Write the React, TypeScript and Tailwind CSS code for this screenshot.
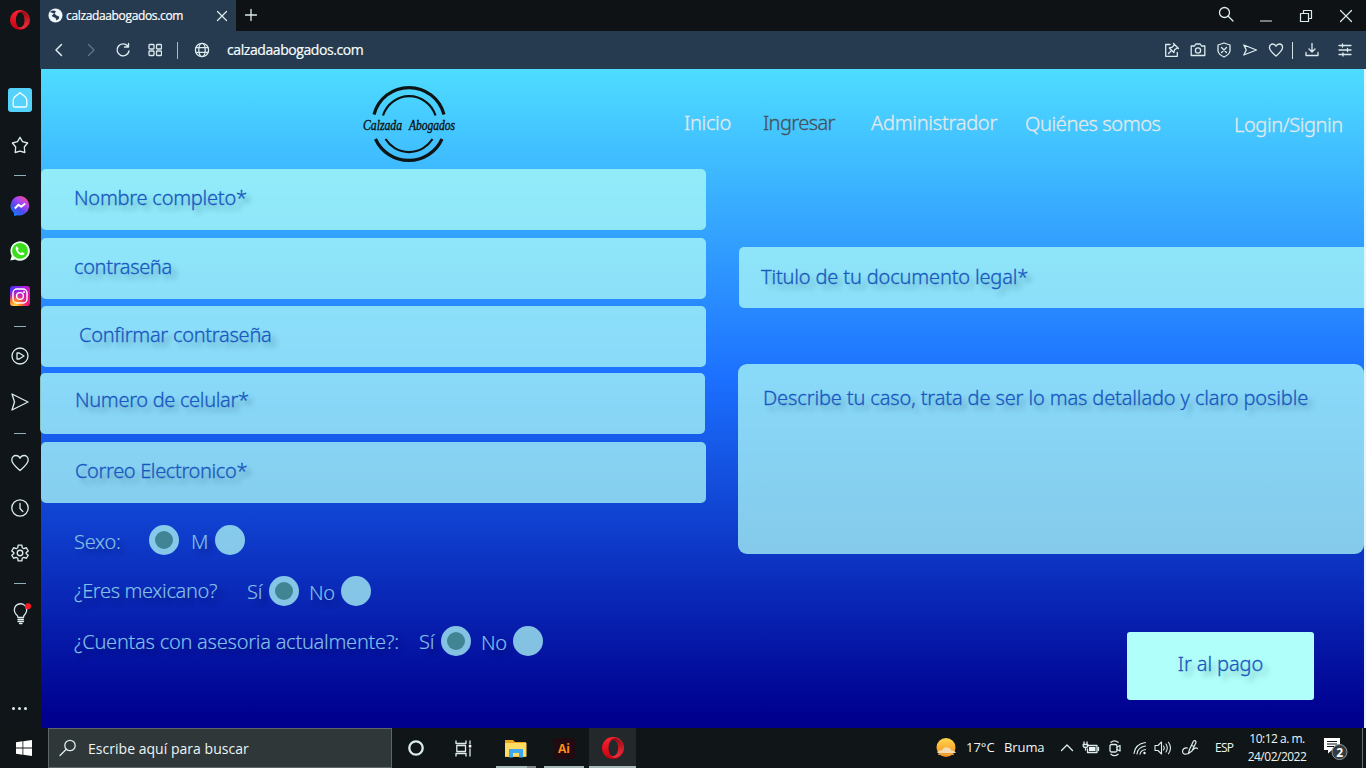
import type { ReactNode } from "react";

type IconProps = { w?: number; h?: number; box?: string; sw?: number; color?: string; children: ReactNode };

function Icon({ w = 20, h = 20, box, sw = 1.3, color = "#dcecee", children }: IconProps) {
  return (
    <svg
      width={w}
      height={h}
      viewBox={box ?? `0 0 ${w} ${h}`}
      fill="none"
      stroke={color}
      strokeWidth={sw}
      strokeLinecap="round"
      strokeLinejoin="round"
      className="shrink-0"
    >
      {children}
    </svg>
  );
}

function OperaLogo({ size }: { size: number }) {
  return (
    <svg width={size} height={size} viewBox="0 0 24 24" className="shrink-0">
      <defs>
        <linearGradient id="operaRed" x1="0" y1="0" x2="0" y2="1">
          <stop offset="0" stopColor="#ff2433" />
          <stop offset="1" stopColor="#c4000f" />
        </linearGradient>
        <linearGradient id="operaDark" x1="0" y1="0" x2="0" y2="1">
          <stop offset="0" stopColor="#8c0a12" />
          <stop offset="0.6" stopColor="#d6202c" />
          <stop offset="1" stopColor="#e83440" />
        </linearGradient>
      </defs>
      <path fillRule="evenodd" fill="url(#operaRed)" d="M12 0a12 12 0 1 0 0 24a12 12 0 0 0 0-24zM12.5 2.6c3 0 5.2 4.2 5.2 9.4s-2.200 9.400-5.200 9.400s-5.400-4.200-5.400-9.400s2.400-9.400 5.400-9.400z" />
      <path fill="url(#operaDark)" d="M9 3.800C10.500 1.800 14 .9 16.500 1.900c9.500 4.500 9.500 15.700 0 20.200c-2.500 1-6 .1-7.500-1.900c5 2.500 8.700-2 8.700-8.200S14 1.300 9 3.800z" />
    </svg>
  );
}

function Cell({ className, children }: { className: string; children?: ReactNode }) {
  return <div className={`flex shrink-0 items-center justify-center ${className}`}>{children}</div>;
}

const Dash = () => <div className="h-px w-3 bg-[#8fb0b8]" />;
const heart = "M10 17.500C6 14 1.800 10.800 1.800 7C1.800 4.300 3.700 2.500 5.900 2.500C7.700 2.500 9.200 3.500 10 5.200C10.800 3.500 12.300 2.500 14.100 2.500C16.300 2.500 18.200 4.300 18.200 7C18.200 10.800 14 14 10 17.500Z";

function Sidebar() {
  return (
    <aside className="flex w-[41px] shrink-0 flex-col items-center bg-[#0f1518] pr-[2px]">
      <Cell className="h-10 w-10"><OperaLogo size={20} /></Cell>
      <div className="h-[37px] shrink-0" />
      <Cell className="h-[46px]">
        <div className="flex h-6 w-6 items-center justify-center rounded-[3px] bg-[#55d2fb]">
          <Icon w={18} h={18} color="#f2ffff">
            <path d="M9 1.700L14.500 6L15.800 9V14.500Q15.800 16 14.300 16H3.700Q2.200 16 2.200 14.500V9L3.500 6Z" />
          </Icon>
        </div>
      </Cell>
      <Cell className="h-11">
        <Icon w={18} h={18}>
          <path d="M9 1.300L11.500 5.600L16.600 7L13.300 11L13.800 16.500L9 15.200L4.200 16.500L4.700 11L1.400 7L6.500 5.600Z" />
        </Icon>
      </Cell>
      <Cell className="h-4"><Dash /></Cell>
      <Cell className="h-[46px]">
        <svg width="20" height="20" viewBox="0 0 20 20">
          <defs>
            <linearGradient id="msgr" x1="0.9" y1="0" x2="0.2" y2="1">
              <stop offset="0" stopColor="#ff5070" />
              <stop offset="0.35" stopColor="#b044f4" />
              <stop offset="0.65" stopColor="#5048f0" />
              <stop offset="1" stopColor="#1080ff" />
            </linearGradient>
          </defs>
          <path fill="url(#msgr)" d="M10 0a9.800 9.700 0 1 1-2.500 19.200L4 20V17A9.800 9.700 0 0 1 10 0z" />
          <path d="M4.800 12.500L8.500 8.700L11.200 10.800L15.200 7.500" fill="none" stroke="#fff" strokeWidth="2" strokeLinejoin="round" />
        </svg>
      </Cell>
      <Cell className="h-11">
        <svg width="20" height="20" viewBox="0 0 20 20">
          <path fill="#edfff0" d="M.3 19.600L1.700 14.800A9.700 9.700 0 1 1 5.300 18.400z" />
          <circle cx="10" cy="9.900" r="7.900" fill="#3ade1c" />
          <path fill="#fff" d="M6.900 5.200Q5.100 6.300 5.700 8.400Q7.400 13.400 12.200 14.300Q14.400 14 14.500 12.200L11.900 10.900L10.900 12.200Q8.800 11.400 7.700 9.100L8.700 8Z" />
        </svg>
      </Cell>
      <Cell className="h-[46px]">
        <svg width="20" height="20" viewBox="0 0 20 20">
          <defs>
            <linearGradient id="igBase" x1="0" y1="0" x2="1" y2="0.7">
              <stop offset="0" stopColor="#3b34ff" />
              <stop offset="0.5" stopColor="#b01de0" />
              <stop offset="1" stopColor="#f01682" />
            </linearGradient>
            <radialGradient id="igWarm" cx="0.25" cy="1" r="0.75">
              <stop offset="0" stopColor="#ffe040" />
              <stop offset="0.4" stopColor="#ff7a20" />
              <stop offset="1" stopColor="#f01682" stopOpacity="0" />
            </radialGradient>
          </defs>
          <rect width="20" height="20" rx="3" fill="url(#igBase)" />
          <rect width="20" height="20" rx="3" fill="url(#igWarm)" />
          <rect x="3" y="3" width="14" height="14" rx="4" fill="none" stroke="#fff" strokeWidth="1.400" />
          <circle cx="10" cy="10" r="3.400" fill="none" stroke="#fff" strokeWidth="1.400" />
          <circle cx="14" cy="6" r="1" fill="#fff" />
        </svg>
      </Cell>
      <Cell className="h-[14px]"><Dash /></Cell>
      <Cell className="h-[46px]">
        <Icon w={18} h={18}><circle cx="9" cy="9" r="8" /><path d="M6 6V12H8.200L13 9L8.200 6Z" /></Icon>
      </Cell>
      <Cell className="h-[46px]">
        <Icon w={18} h={18}><path d="M1 1L17 9L1 17L3.500 9Z" /></Icon>
      </Cell>
      <Cell className="h-4"><Dash /></Cell>
      <Cell className="h-11"><Icon><path d={heart} /></Icon></Cell>
      <Cell className="h-[46px]">
        <Icon w={18} h={18}><circle cx="9" cy="9" r="8.200" /><path d="M9 4.500V9.500L11.800 12.500" /></Icon>
      </Cell>
      <Cell className="h-[43px]">
        <Icon w={18} h={18} box="0 0 24 24" sw={1.8}>
          <path d="M9.500 1.500H14.500L15 5L17.200 6.300L20.500 5L23 9.300L20.200 11.500V13L23 15L20.500 19L17.200 17.800L15 19L14.500 22.500H9.500L9 19L6.800 17.800L3.500 19L1 15L3.800 13V11.500L1 9.300L3.500 5L6.800 6.300L9 5Z" />
          <circle cx="12" cy="12" r="3.700" />
        </Icon>
      </Cell>
      <Cell className="h-[18px]"><Dash /></Cell>
      <Cell className="h-[42px] pt-[2px]">
        <Icon w={22} h={22}>
          <path d="M9 14.500Q9 12.500 7 11.200A6.200 6.200 0 1 1 16.200 11Q14.500 12.500 14.500 14.500Z" />
          <path d="M9 16.500H14.500M9 18.500H14.500M10.500 20.500H13" />
          <circle cx="19" cy="3.200" r="3" fill="#ff1a24" stroke="none" />
        </Icon>
      </Cell>
      <div className="h-[62px] shrink-0" />
      <Cell className="h-6 gap-[3px]">
        <i className="h-[3px] w-[3px] rounded-full bg-[#dcecee]" />
        <i className="h-[3px] w-[3px] rounded-full bg-[#dcecee]" />
        <i className="h-[3px] w-[3px] rounded-full bg-[#dcecee]" />
      </Cell>
    </aside>
  );
}

function TabBar() {
  return (
    <div className="flex h-[31px] shrink-0 bg-[#0e1214] text-white">
      <div className="flex w-[196px] items-center bg-[#263a50] pl-[8px]">
        <svg width="15" height="15" viewBox="0 0 15 15">
          <circle cx="7.500" cy="7.500" r="7" fill="#eef6fa" />
          <path d="M2 4Q5 1.500 8 3.500L6.500 5.500L8.500 7.500Q12 8 11 10.500L8.500 12.500L7.500 10L3.500 8L6 5.500Z" fill="#263a50" />
        </svg>
        <span className="ml-[3px] w-[149px] font-['Open_Sans','Noto_Sans',sans-serif] text-[12px] tracking-[-0.35px] text-white [-webkit-text-stroke:0.2px]">calzadaabogados.com</span>
        <Icon w={14} h={14}><path d="M2.500 2.500L11.500 11.500M11.500 2.500L2.500 11.500" /></Icon>
      </div>
      <Cell className="w-[30px] pb-px"><Icon w={14} h={14} sw={1.3}><path d="M7 1.500V12.500M1.500 7H12.500" /></Icon></Cell>
      <div className="flex-1" />
      <Cell className="w-10 pb-[3px]"><Icon w={16} h={16} sw={1.3}><circle cx="6.500" cy="6.500" r="5" /><path d="M10.200 10.200L15 15" /></Icon></Cell>
      <Cell className="w-10"><Icon w={14} h={14} sw={1.2}><path d="M1.500 12H12.500" /></Icon></Cell>
      <Cell className="w-10"><Icon w={14} h={14} sw={1.2}><path d="M1.500 4.500H9.500V12.500H1.500ZM4.500 4.500V1.500H12.500V9.500H9.500" /></Icon></Cell>
      <Cell className="w-10"><Icon w={14} h={14} sw={1.2}><path d="M1.500 1.500L12.500 12.500M12.500 1.500L1.500 12.500" /></Icon></Cell>
    </div>
  );
}

function AddressBar() {
  return (
    <div className="flex h-[38px] shrink-0 items-center bg-[#263a50]">
      <Cell className="w-[38px]"><Icon w={12} h={14} sw={1.5}><path d="M8.500 1.500L3 7L8.500 12.500" /></Icon></Cell>
      <Cell className="w-[26px]"><Icon w={12} h={14} sw={1.4} color="#5d7488"><path d="M3.500 1.500L9 7L3.500 12.500" /></Icon></Cell>
      <Cell className="w-[38px]"><Icon w={16} h={16} sw={1.4}><path d="M12.700 4A6 6 0 1 0 14 9M13.500 1.500V5H9.500" /></Icon></Cell>
      <Cell className="w-[26px]">
        <Icon w={14} h={14}><rect x="1" y="1.500" width="5" height="4.500" rx=".8" /><rect x="8.500" y="1.500" width="5" height="4.500" rx=".8" /><rect x="1" y="8" width="5" height="4.500" rx=".8" /><rect x="8.500" y="8" width="5" height="4.500" rx=".8" /></Icon>
      </Cell>
      <Cell className="w-[18px]"><i className="h-[17px] w-px bg-[#a9bcc6]" /></Cell>
      <Cell className="w-[32px]">
        <Icon w={16} h={16}><circle cx="8" cy="8" r="6.600" /><ellipse cx="8" cy="8" rx="3.200" ry="6.600" /><path d="M2 5.700H14M2 10.300H14" /></Icon>
      </Cell>
      <span className="ml-[9px] flex-1 font-['Open_Sans','Noto_Sans',sans-serif] text-[14px] leading-none tracking-[-0.42px] text-[#f6feff] [-webkit-text-stroke:0.2px]">calzadaabogados.com</span>
      <Cell className="w-[26px]">
        <Icon w={16} h={16}><path d="M6 2.500H1.700V14.300H13.300V10.500M4.500 11.500L7.300 8.700M9.500 1.500L14.500 6.500M10.300 2.800L8.300 5.200L5.300 6L9.800 10.500L10.600 7.800L13.200 6" /></Icon>
      </Cell>
      <Cell className="w-[26px]">
        <Icon w={16} h={16}><path d="M1.200 4H4.500L5.800 2H10.200L11.500 4H14.800V13.500H1.200Z" /><circle cx="8" cy="8.500" r="2.600" /></Icon>
      </Cell>
      <Cell className="w-[26px]">
        <Icon w={16} h={16}><path d="M8 1L14 3V9Q13.500 12.500 8 15Q2.500 12.500 2 9V3ZM5.500 5.500L10.500 10.500M10.500 5.500L5.500 10.500" /></Icon>
      </Cell>
      <Cell className="w-[26px]"><Icon w={16} h={16}><path d="M1.800 3L14.500 8L1.800 13L4.300 8Z" /></Icon></Cell>
      <Cell className="w-[26px]"><Icon w={16} h={16} box="0 0 20 20" sw={1.6}><path d={heart} /></Icon></Cell>
      <Cell className="w-[6px]"><i className="h-[17px] w-px bg-[#d0e0e4]" /></Cell>
      <Cell className="w-[33px]">
        <Icon w={16} h={16} sw={1.3}><path d="M8 1.500V10M5 7L8 10L11 7M2 10.500V13.500H14V10.500" /></Icon>
      </Cell>
      <Cell className="mr-[5px] w-[33px]">
        <Icon w={14} h={14}><path d="M1 2.500H13M1 7H13M1 11.500H13M4.500 1V4M9.500 5.500V8.500M5 10V13" /></Icon>
      </Cell>
    </div>
  );
}

function Logo() {
  return (
    <svg width="100" height="82" viewBox="0 0 100 82" fill="none" stroke="#0d1413" className="overflow-visible">
      <path d="M15 31.500A36.200 36.200 0 0 1 85 31.500" strokeWidth="3.200" />
      <path d="M24 32.500A27.500 27.500 0 0 1 76.500 32.500" strokeWidth="2.200" />
      <path d="M16.500 56A36.500 36.500 0 0 0 83 56" strokeWidth="3.200" />
      <path d="M26.500 56A27.700 27.700 0 0 0 73.500 56" strokeWidth="2.200" />
      <text x="4" y="47" textLength="39" lengthAdjust="spacingAndGlyphs" fill="#0d1413" strokeWidth=".4" className="font-['Liberation_Serif',serif] text-[14px] italic">Calzada</text>
      <text x="50" y="47" textLength="46" lengthAdjust="spacingAndGlyphs" fill="#0d1413" strokeWidth=".4" className="font-['Liberation_Serif',serif] text-[14px] italic">Abogados</text>
    </svg>
  );
}

const fieldBase =
  "shrink-0 bg-[rgba(176,253,247,0.74)] text-[#1858c0] [-webkit-text-stroke:0.3px] [text-shadow:5px_5px_5px_rgba(20,60,80,0.35)]";

function Field({ className, children }: { className: string; children: ReactNode }) {
  return <div className={`${fieldBase} h-[61px] whitespace-nowrap rounded-[5px] leading-[28px] ${className}`}>{children}</div>;
}

function Radio({ checked }: { checked?: boolean }) {
  return (
    <span className="flex h-[30px] w-[30px] shrink-0 items-center justify-center rounded-full bg-[rgba(166,240,244,0.79)]">
      {checked && <span className="h-[18px] w-[18px] rounded-full bg-[#418493]" />}
    </span>
  );
}

function Page() {
  return (
    <main className="flex flex-1 flex-col border-r-2 border-[#e8f4f8] bg-[linear-gradient(180deg,#4edcff_0%,#1c70ff_47%,#00008f_98%)] font-['Noto_Sans',sans-serif] text-[20px] font-light">
      <nav className="flex h-[100px] shrink-0 whitespace-nowrap leading-[28px] text-[#e3e9ea] [-webkit-text-stroke:0.3px]">
        <div className="w-[643px] shrink-0 pl-[318px] pt-[14px]"><Logo /></div>
        <span className="w-[79px] shrink-0 pt-10 tracking-[-0.3px]">Inicio</span>
        <span className="w-[108px] shrink-0 pt-10 tracking-[-0.6px] text-[#46525a]">Ingresar</span>
        <span className="w-[154px] shrink-0 pt-10 tracking-[-0.25px]">Administrador</span>
        <span className="w-[209px] shrink-0 pt-[41px] tracking-[-0.4px]">Quiénes somos</span>
        <span className="pt-[42px] tracking-[-0.4px]">Login/Signin</span>
      </nav>
      <div className="flex flex-1">
        <form className="flex w-[697px] shrink-0 flex-col">
          <Field className="w-[665px] pl-[33px] pt-[15px] tracking-[-0.23px]">Nombre completo*</Field>
          <Field className="mt-2 w-[665px] pl-[33px] pt-[15px] tracking-[-0.35px]">contraseña</Field>
          <Field className="mt-[7px] w-[665px] pl-[38px] pt-[15px] tracking-[-0.27px]">Confirmar contraseña</Field>
          <Field className="-ml-px mt-[6px] w-[665px] pl-[35px] pt-[13px] tracking-[-0.32px]">Numero de celular*</Field>
          <Field className="mt-2 w-[665px] pl-[34px] pt-[15px] tracking-[-0.36px]">Correo Electronico*</Field>
          <div className="flex flex-col whitespace-nowrap pl-[33px] pt-[22px] leading-[30px] tracking-[-0.25px] text-[#83c0e8] [-webkit-text-stroke:0.15px] [text-shadow:5px_5px_5px_rgba(0,0,60,0.4)]">
            <div className="flex h-[51px] items-start">
              <span className="w-[75px] pt-[2px]">Sexo:</span>
              <Radio checked />
              <span className="ml-3 w-[24px] pt-[2px]">M</span>
              <Radio />
            </div>
            <div className="flex h-[50px] items-start">
              <span className="w-[173px] tracking-[-0.35px]">¿Eres mexicano?</span>
              <span className="w-[22px] pt-px">Sí</span>
              <Radio checked />
              <span className="ml-[10px] w-[32px] pt-[2px]">No</span>
              <Radio />
            </div>
            <div className="flex items-start">
              <span className="w-[345px] pt-px">¿Cuentas con asesoria actualmente?:</span>
              <span className="w-[22px] pt-px">Sí</span>
              <Radio checked />
              <span className="ml-[10px] w-[32px] pt-[2px]">No</span>
              <Radio />
            </div>
          </div>
        </form>
        <section className="flex flex-1 flex-col pt-[78px]">
          <Field className="ml-px rounded-r-none pl-[22px] pt-[16px] tracking-[-0.16px]">Titulo de tu documento legal*</Field>
          <div className={`${fieldBase} mt-14 h-[190px] whitespace-nowrap rounded-[9px] pl-[25px] pt-5 leading-[28px] tracking-[-0.13px]`}>
            Describe tu caso, trata de ser lo mas detallado y claro posible
          </div>
          <button className="ml-[389px] mt-[78px] h-[68px] w-[187px] shrink-0 rounded-[3px] bg-[#b1fffa] pb-1 font-light tracking-[-0.1px] text-[#1858c0] [-webkit-text-stroke:0.3px] [text-shadow:5px_5px_5px_rgba(20,60,80,0.35)]">
            Ir al pago
          </button>
        </section>
      </div>
    </main>
  );
}

function Taskbar() {
  return (
    <footer className="flex h-10 shrink-0 items-stretch bg-[#101517] font-['Open_Sans','Noto_Sans',sans-serif] text-[#edf5f5]">
      <Cell className="w-12">
        <svg width="16" height="16" viewBox="0 0 16 16" fill="#fff"><path d="M0 2.300L6.500 1.300V7.500H0zM7.300 1.200L16 0V7.500H7.300zM0 8.400H6.500V14.700L0 13.700zM7.300 8.400H16V16L7.300 14.800z" /></svg>
      </Cell>
      <div className="flex w-[344px] shrink-0 items-center border border-[#5c6868] bg-[#2f3739] pl-[10px]">
        <Icon w={18} h={18} sw={1.3}><circle cx="11" cy="6.500" r="5.200" /><path d="M7.300 10.300L1 16.500" /></Icon>
        <span className="ml-[11px] text-[14px] tracking-[0.03px]">Escribe aquí para buscar</span>
      </div>
      <Cell className="w-12"><Icon w={18} h={18} sw={2.3}><circle cx="9" cy="9" r="6.700" /></Icon></Cell>
      <Cell className="w-[47px]">
        <Icon w={17} h={17}><path d="M1 1V3.500H11V1M1 16V13.500H11V16M1.800 5.500H10.500V11.500H1.800ZM15 1V4M15 9V16" /><rect x="13.800" y="5" width="2.500" height="2.500" fill="#fff" stroke="none" /></Icon>
      </Cell>
      <div className="flex w-[57px] shrink-0 flex-col items-center justify-end">
        <svg width="22" height="20" viewBox="0 0 22 20" className="mb-[7px]">
          <path d="M0 1H8L10 3H21V18H0z" fill="#eda522" />
          <path d="M0 4H21.500V17.500H0z" fill="#ffdb63" />
          <path d="M4 10H18V18.500H14V14H8V18.500H4z" fill="#3fa7f2" />
        </svg>
        <div className="flex h-[2px] w-10"><i className="w-[31px] bg-[#a9b8b8]" /><i className="flex-1 bg-[#7c8888]" /></div>
      </div>
      <div className="flex w-10 shrink-0 flex-col items-center justify-end">
        <div className="mb-[7px] flex h-[21px] w-[22px] items-center justify-center rounded-[4px] bg-[#210b10] text-[12px] font-bold leading-none text-[#ff8c19]">Ai</div>
        <i className="h-[2px] w-10 bg-[#a9b8b8]" />
      </div>
      <div className="ml-[5px] flex w-12 shrink-0 flex-col items-center justify-end border-r border-[#101517] bg-[#23282a]">
        <div className="mb-[7px]"><OperaLogo size={22} /></div>
        <i className="h-[2px] w-full bg-[#a9b8b8]" />
      </div>
      <div className="flex-1" />
      <Cell className="w-6">
        <svg width="22" height="22" viewBox="0 0 22 22">
          <defs><linearGradient id="sun" x1="0" y1="0" x2="0" y2="1"><stop offset="0" stopColor="#ffd752" /><stop offset="1" stopColor="#f58b16" /></linearGradient></defs>
          <circle cx="11" cy="10.500" r="9.500" fill="url(#sun)" />
          <path d="M2 16Q4 12.500 7 13.500Q9 9 13 10.500Q16 11 16 13.500Q20 13 21 16Z" fill="#f0dcb4" />
          <path d="M3 17.300H19" stroke="#e9a952" />
        </svg>
      </Cell>
      <span className="ml-2 w-[38px] self-center whitespace-nowrap text-[13px]">17°C</span>
      <span className="w-[50px] self-center whitespace-nowrap text-[13px] tracking-[-0.1px]">Bruma</span>
      <Cell className="w-[25px]"><Icon w={14} h={14} sw={1.4}><path d="M1.500 9.500L7 4L12.500 9.500" /></Icon></Cell>
      <Cell className="w-[24px]">
        <Icon w={18} h={14}><path d="M5.500 4.500H15V11.500H5.500V8M16.500 6.500V9.500M2 1V3.500M5 1V3.500M1.200 3.500H5.800V5Q5.500 6.500 3.500 6.500Q1.500 6.500 1.200 5ZM3.500 6.500V9" /><rect x="7" y="6" width="6.500" height="4" fill="#edf5f5" stroke="none" /></Icon>
      </Cell>
      <Cell className="w-[24px]">
        <Icon w={16} h={18}><rect x="3" y="5.500" width="7" height="7.500" rx="1.500" /><path d="M10 8L13 6.500V12L10 10.500M4 3.300Q7.500 .5 11 3.300M4 15.200Q7.500 18 11 15.200" /></Icon>
      </Cell>
      <Cell className="w-[26px]">
        <Icon w={14} h={14} sw={1.1}><path d="M1 12.500Q2 3 12.500 1.500M4 13Q4.500 6.500 12.500 5M7 13.300Q7.500 9.500 12.500 8.500" /><circle cx="11.500" cy="12" r="1.200" fill="#fff" stroke="none" /></Icon>
      </Cell>
      <Cell className="w-[20px]">
        <Icon w={18} h={16} sw={1.1}><path d="M1 5.500H4L7.500 2V14L4 10.500H1ZM9.500 6Q11 8 9.500 10M12 4Q14.500 8 12 12M14.500 2.300Q18.500 8 14.500 13.700" /></Icon>
      </Cell>
      <Cell className="w-[34px]">
        <Icon w={18} h={18} sw={1.2}><path d="M7.500 14L8.500 10.500L12.500 2Q15 1 15 3.500L11 12L7.500 14.500M10.500 6.500L13.200 7.500M6.500 9Q2 8.500 1.500 12.500Q2 16.500 7.500 14.500M12.500 10.500Q14.500 8 16.500 9.500" /></Icon>
      </Cell>
      <span className="ml-2 w-[30px] self-center text-[12px] tracking-[-0.7px]">ESP</span>
      <div className="flex w-[64px] flex-col items-center justify-center whitespace-nowrap text-[12px] leading-[18px] tracking-[-0.5px]">
        <span>10:12 a. m.</span>
        <span>24/02/2022</span>
      </div>
      <Cell className="w-[53px]">
        <svg width="24" height="24" viewBox="0 0 24 24" className="overflow-visible">
          <path d="M0 2H16V14H8L4 17.500V14H0z" fill="#fff" />
          <path d="M3 5.500H13M3 8H13M3 10.500H10" stroke="#101517" />
          <circle cx="15.500" cy="16" r="7.500" fill="#343c3f" stroke="#909a9c" />
          <text x="12.200" y="20.500" fill="#fff" className="font-['Open_Sans',sans-serif] text-[12px] font-bold">2</text>
        </svg>
      </Cell>
      <div className="mr-[3px] w-px bg-[#667070]" />
    </footer>
  );
}

export default function App() {
  return (
    <div className="flex h-[768px] w-[1366px] flex-col overflow-hidden bg-[#0f1518]">
      <div className="flex h-[728px] shrink-0">
        <Sidebar />
        <div className="flex min-w-0 flex-1 flex-col">
          <div className="-ml-px shrink-0">
            <TabBar />
            <AddressBar />
          </div>
          <Page />
        </div>
      </div>
      <Taskbar />
    </div>
  );
}
